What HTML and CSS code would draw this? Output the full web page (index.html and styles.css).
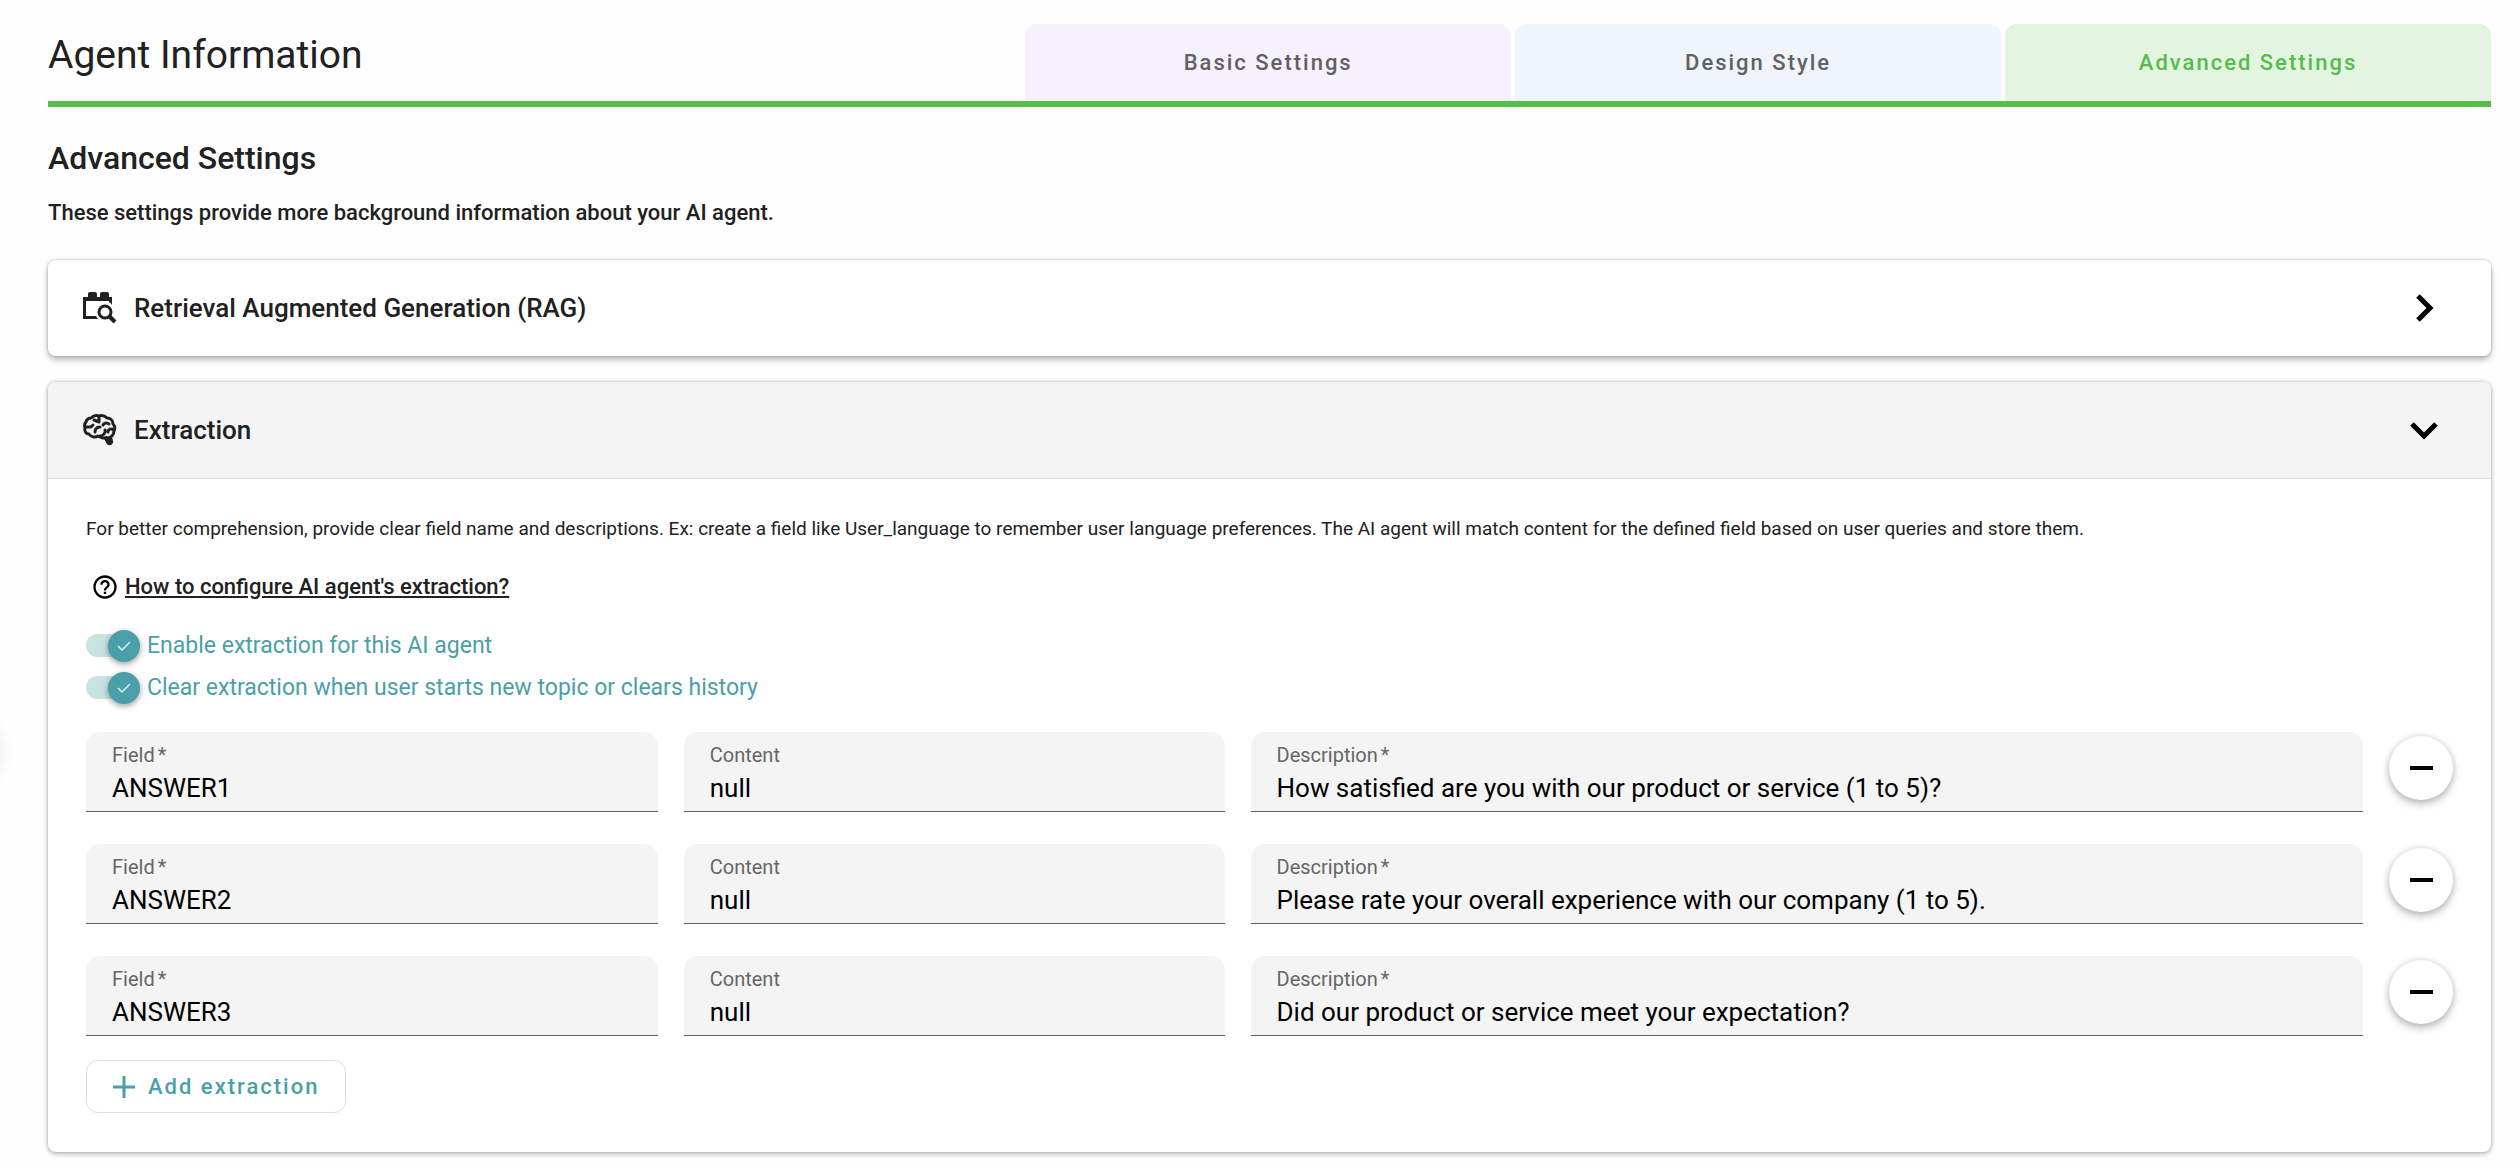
FILE: index.html
```html
<!DOCTYPE html>
<html lang="en">
<head>
<meta charset="utf-8">
<title>Agent Information</title>
<link rel="stylesheet" href="styles.css">
</head>
<body>
<main class="page">
  <header class="page-header">
    <h1 class="page-title">Agent Information</h1>
    <nav class="tabs">
      <button class="tab tab-basic" type="button">Basic Settings</button>
      <button class="tab tab-design" type="button">Design Style</button>
      <button class="tab tab-advanced" type="button" aria-current="page">Advanced Settings</button>
    </nav>
  </header>

  <h2 class="section-title">Advanced Settings</h2>
  <p class="section-note">These settings provide more background information about your AI agent.</p>

  <section class="card">
    <button class="card-header" type="button" aria-expanded="false">
      <svg class="card-icon" viewBox="0 0 40 40" aria-hidden="true">
        <path d="M5 9h5V6q0-2 2-2h5q2 0 2 2v3h3V6q0-2 2-2h5q2 0 2 2v3h3v8q-1-2-3-3v-1H8v15h10q1 2 2 3H5z" fill="#212121"/>
        <circle cx="27" cy="24" r="6" fill="none" stroke="#212121" stroke-width="3"/>
        <path d="M31 28l6 6" stroke="#212121" stroke-width="4"/>
      </svg>
      <span class="card-title">Retrieval Augmented Generation (RAG)</span>
      <svg class="chevron" viewBox="0 0 40 40" aria-hidden="true"><path d="M14 8l12 12-12 12" fill="none" stroke="#000" stroke-width="5"/></svg>
    </button>
  </section>

  <section class="card card-open">
    <button class="card-header card-header-open" type="button" aria-expanded="true">
      <svg class="card-icon" viewBox="0 0 40 40" aria-hidden="true">
        <g fill="none" stroke="#212121" stroke-width="3" stroke-linecap="round" stroke-linejoin="round">
          <path d="M13 8c2-2 5-3 8-2 3-1 6 0 8 2 4 0 6 3 6 6 2 2 2 5 1 7 0 4-3 7-7 7-4 1-7-1-9-2-3 2-7 1-9-2-3 0-5-3-4-6-1-3 0-5 1-6 1-3 3-4 5-4z"/>
          <path d="M21 6v6M21 12l-5-2M8 17h5l2-2M22 17c-4 0-5 3-5 5M25 15c1-2 4-3 6-1M36 20c-3-2-6-1-6 2M22 26c3 0 6-3 5-6"/>
          <path d="M28 28l2 4c1 2 4 1 3-1l-1-3" stroke-width="4"/>
        </g>
      </svg>
      <span class="card-title">Extraction</span>
      <svg class="chevron" viewBox="0 0 40 40" aria-hidden="true"><path d="M8 14l12 12 12-12" fill="none" stroke="#000" stroke-width="5"/></svg>
    </button>

    <div class="card-body">
      <p class="intro">For better comprehension, provide clear field name and descriptions. Ex: create a field like User_language to remember user language preferences. The AI agent will match content for the defined field based on user queries and store them.</p>
      <a class="help" href="#extraction-help">
        <svg class="help-icon" viewBox="0 0 24 24" aria-hidden="true"><path d="M11 18h2v-2h-2v2zm1-16C6.480 2 2 6.480 2 12s4.480 10 10 10 10-4.480 10-10S17.520 2 12 2zm0 18c-4.410 0-8-3.590-8-8s3.590-8 8-8 8 3.590 8 8-3.590 8-8 8zm0-14c-2.210 0-4 1.790-4 4h2c0-1.100.9-2 2-2s2 .9 2 2c0 2-3 1.750-3 5h2c0-2.250 3-2.500 3-5 0-2.210-1.790-4-4-4z"/></svg>
        <span class="help-text">How to configure AI agent's extraction?</span>
      </a>

      <div class="switches">
        <label class="switch">
          <input class="switch-input" type="checkbox" checked>
          <span class="switch-track"><span class="switch-thumb"><svg class="switch-check" viewBox="0 0 16 16" aria-hidden="true"><path d="M2 8l4 4 8-8" fill="none" stroke="#d9f0f1" stroke-width="1.5"/></svg></span></span>
          <span>Enable extraction for this AI agent</span>
        </label>
        <label class="switch">
          <input class="switch-input" type="checkbox" checked>
          <span class="switch-track"><span class="switch-thumb"><svg class="switch-check" viewBox="0 0 16 16" aria-hidden="true"><path d="M2 8l4 4 8-8" fill="none" stroke="#d9f0f1" stroke-width="1.5"/></svg></span></span>
          <span>Clear extraction when user starts new topic or clears history</span>
        </label>
      </div>

      <div class="rows">
        <div class="row">
          <div class="field"><label class="field-label" for="field-1">Field<span class="required">*</span></label><input class="field-input" id="field-1" type="text" value="ANSWER1"></div>
          <div class="field"><label class="field-label" for="content-1">Content</label><input class="field-input" id="content-1" type="text" value="null"></div>
          <div class="field"><label class="field-label" for="description-1">Description<span class="required">*</span></label><input class="field-input" id="description-1" type="text" value="How satisfied are you with our product or service (1 to 5)?"></div>
          <button class="remove" type="button" aria-label="Remove extraction 1"><span class="minus"></span></button>
        </div>
        <div class="row">
          <div class="field"><label class="field-label" for="field-2">Field<span class="required">*</span></label><input class="field-input" id="field-2" type="text" value="ANSWER2"></div>
          <div class="field"><label class="field-label" for="content-2">Content</label><input class="field-input" id="content-2" type="text" value="null"></div>
          <div class="field"><label class="field-label" for="description-2">Description<span class="required">*</span></label><input class="field-input" id="description-2" type="text" value="Please rate your overall experience with our company (1 to 5)."></div>
          <button class="remove" type="button" aria-label="Remove extraction 2"><span class="minus"></span></button>
        </div>
        <div class="row">
          <div class="field"><label class="field-label" for="field-3">Field<span class="required">*</span></label><input class="field-input" id="field-3" type="text" value="ANSWER3"></div>
          <div class="field"><label class="field-label" for="content-3">Content</label><input class="field-input" id="content-3" type="text" value="null"></div>
          <div class="field"><label class="field-label" for="description-3">Description<span class="required">*</span></label><input class="field-input" id="description-3" type="text" value="Did our product or service meet your expectation?"></div>
          <button class="remove" type="button" aria-label="Remove extraction 3"><span class="minus"></span></button>
        </div>
      </div>

      <button class="add" type="button">
        <svg class="add-icon" viewBox="0 0 24 24" aria-hidden="true"><path d="M12 1v22M1 12h22" fill="none" stroke="currentColor" stroke-width="3"/></svg>
        Add extraction
      </button>
    </div>
  </section>
</main>
</body>
</html>
```
FILE: styles.css
```css
* {
  box-sizing: border-box;
}

body {
  margin: 0;
  background: #fefefe;
  color: #212121;
  font-family: Roboto, sans-serif;
}

/* Shadow of the round drawer handle tucked behind the left edge */
body::before {
  content: "";
  position: absolute;
  top: 718px;
  left: -66px;
  width: 64px;
  height: 64px;
  border-radius: 50%;
  box-shadow: 0 2px 18px rgba(0, 0, 0, 0.12);
}

button,
input {
  font-family: inherit;
}

h1,
h2,
p {
  margin: 0;
}

.page {
  padding: 24px 27px 14px 48px;
}

.page-header {
  display: flex;
  border-bottom: 6px solid #56bd4b;
}

.page-title {
  flex: 2;
  padding-top: 8px;
  font-size: 39px;
  font-weight: 400;
  line-height: 46px;
}

.tabs {
  display: grid;
  flex: 3;
  grid-template-columns: repeat(3, 1fr);
  gap: 4px;
}

.tab {
  height: 77px;
  border: 0;
  border-radius: 12px 12px 0 0;
  color: #616161;
  font-size: 22px;
  font-weight: 500;
  letter-spacing: 2px;
}

.tab-basic {
  background: #f5f2fe;
}

.tab-design {
  background: #f0f5fd;
}

.tab-advanced {
  background: #e3f4e1;
  color: #56bd4b;
}

.section-title {
  margin-top: 31px;
  font-size: 32px;
  font-weight: 500;
  line-height: 40px;
}

.section-note {
  margin-top: 19px;
  font-size: 22px;
  font-weight: 500;
  line-height: 32px;
}

.card {
  margin-top: 31px;
  border-radius: 8px;
  background: #fff;
  box-shadow: 0 0 3px rgba(0, 0, 0, 0.3), 0 4px 6px rgba(0, 0, 0, 0.25);
}

.card-open {
  margin-top: 26px;
  box-shadow: 0 0 4px rgba(0, 0, 0, 0.3), 0 3px 5px rgba(0, 0, 0, 0.15);
}

.card-header {
  display: flex;
  align-items: center;
  gap: 16px;
  width: 100%;
  height: 96px;
  padding: 0 47px 0 30px;
  border: 0;
  border-radius: 8px;
  background: #fff;
  color: inherit;
}

.card-header-open {
  height: 97px;
  border-bottom: 1px solid #dedede;
  border-radius: 8px 8px 0 0;
  background: #f4f4f4;
}

.card-icon,
.chevron {
  width: 40px;
  height: 40px;
}

.card-title {
  font-size: 26px;
  font-weight: 500;
}

.chevron {
  margin-left: auto;
}

.card-body {
  padding: 36px 38px 39px;
}

.intro {
  font-size: 19px;
  line-height: 28px;
}

.help {
  display: flex;
  align-items: center;
  gap: 6px;
  width: max-content;
  margin: 30px 0 23px 5px;
  color: inherit;
}

.help-icon {
  width: 28px;
  height: 28px;
}

.help-text {
  font-size: 22px;
  font-weight: 500;
  line-height: 28px;
}

.switches {
  color: #4a9fa8;
  font-size: 23px;
}

.switch {
  display: flex;
  align-items: center;
  gap: 13px;
  width: max-content;
  height: 42px;
}

.switch-input {
  position: absolute;
  opacity: 0;
}

.switch-track {
  width: 48px;
  height: 23px;
  border-radius: 12px;
  background: #c8e3e4;
}

.switch-thumb {
  display: flex;
  align-items: center;
  justify-content: center;
  width: 32px;
  height: 32px;
  margin: -4px 0 0 22px;
  border-radius: 50%;
  background: #4a9fa8;
  box-shadow: 0 2px 6px rgba(0, 0, 0, 0.4);
}

.switch-check {
  width: 16px;
  height: 16px;
}

.rows {
  display: grid;
  gap: 32px;
  margin-top: 24px;
}

.row {
  display: grid;
  grid-template-columns: 572fr 541fr 1113fr 64px;
  gap: 26px;
}

.field {
  height: 80px;
  padding: 10px 26px 0;
  border-bottom: 1px solid #616161;
  border-radius: 14px 14px 0 0;
  background: #f4f4f4;
}

.field-label {
  display: block;
  color: #666;
  font-size: 20px;
  line-height: 26px;
}

.required {
  margin-left: 3px;
}

.field-input {
  display: block;
  width: 100%;
  height: 40px;
  padding: 0;
  border: 0;
  background: transparent;
  color: #000;
  font-size: 26px;
}

.remove {
  display: flex;
  align-items: center;
  justify-content: center;
  width: 64px;
  height: 64px;
  margin-top: 4px;
  border: 0;
  border-radius: 50%;
  background: #fff;
  box-shadow: 0 4px 8px rgba(0, 0, 0, 0.25), 0 0 6px rgba(0, 0, 0, 0.12);
}

.minus {
  width: 23px;
  height: 4px;
  background: #000;
}

.add {
  display: flex;
  align-items: center;
  gap: 12px;
  height: 53px;
  margin-top: 24px;
  padding: 0 26px 0 25px;
  border: 1px solid #dedede;
  border-radius: 12px;
  background: #fff;
  color: #4a9fa8;
  font-size: 22px;
  font-weight: 500;
  letter-spacing: 2px;
}

.add-icon {
  width: 24px;
  height: 24px;
}
```
